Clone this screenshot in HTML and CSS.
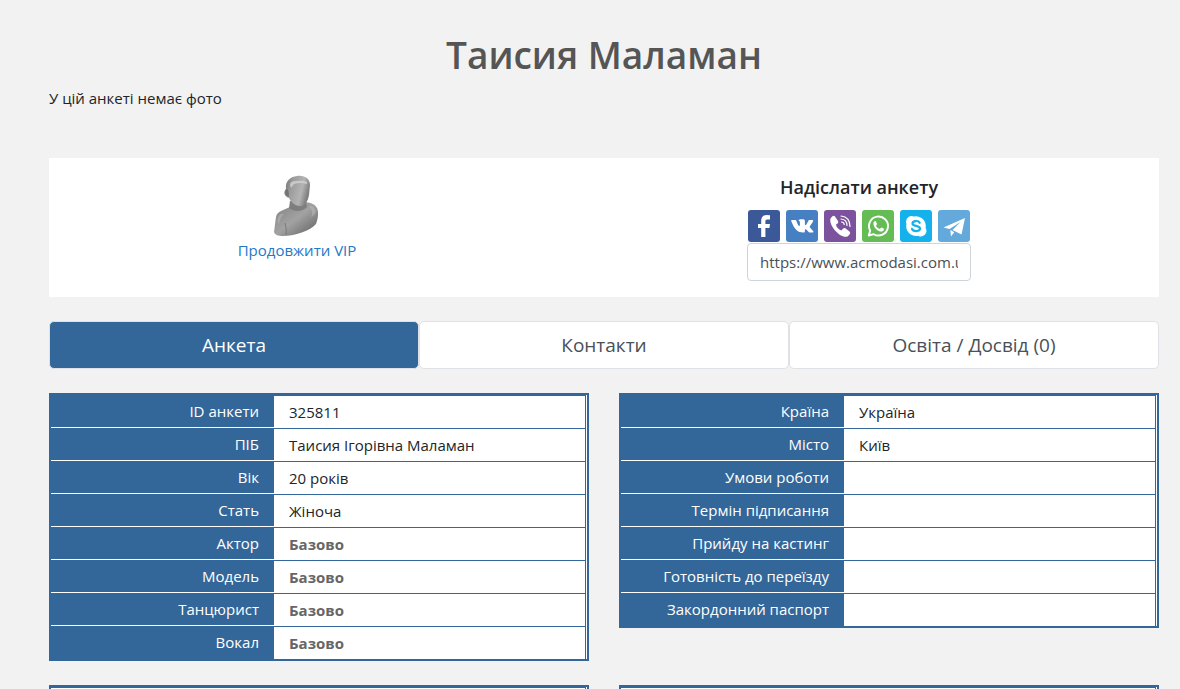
FILE: index.html
```html
<!DOCTYPE html>
<html lang="uk">
<head>
<meta charset="utf-8">
<meta name="viewport" content="width=device-width, initial-scale=1">
<title>Таисия Маламан</title>
<link rel="stylesheet" href="styles.css">
</head>
<body>
<main class="page">
  <h1 class="name">Таисия Маламан</h1>
  <p class="no-photo">У цій анкеті немає фото</p>

  <section class="panel">
    <div class="vip">
      <svg class="avatar" viewBox="0 0 46 64" aria-hidden="true">
        <defs>
          <linearGradient id="body" x1="0" y1="0" x2="1" y2="1">
            <stop offset="0" stop-color="#808080"/><stop offset=".5" stop-color="#a2a2a2"/><stop offset="1" stop-color="#5c5c5c"/>
          </linearGradient>
          <linearGradient id="head" x1="0" y1="0" x2="1" y2=".3">
            <stop offset="0" stop-color="#6c6c6c"/><stop offset=".35" stop-color="#9c9c9c"/><stop offset=".75" stop-color="#b4b4b4"/><stop offset="1" stop-color="#808080"/>
          </linearGradient>
        </defs>
        <path fill="url(#body)" d="M16 33C10 36 3 37 2 43L0 58C1 61 4 62 9 62C22 62 37 56 42 50C44 45 45 38 43 34C41 30 37 29 32 28Z"/>
        <path fill="#7e7e7e" d="M16 27L15 34C20 38 28 38 33 33L32 28Z"/>
        <path fill="none" stroke="#7a7a7a" d="M12 61Q13 55 11 49"/>
        <path fill="#bdbdbd" opacity=".5" d="M4 44Q6 39 10 40Q6 43 5 50Q3 49 4 44ZM35 32Q41 32 42 38Q40 42 37 43Q40 37 35 32Z"/>
        <path fill="url(#head)" d="M12 15C11 7 16 3 23 2C31 1 36 5 36 11L35 21C34 28 30 33 25 32C20 31 17 28 15 24C10 22 9 18 12 15Z"/>
        <path fill="#d2d2d2" opacity=".8" d="M16 11Q16 7 22 7Q29 6 33 8V10Q26 8 20 10L17 14Z"/>
        <path fill="#686868" opacity=".7" d="M12 15Q15 14 15 23Q10 22 12 15Z"/>
      </svg>
      <a class="vip-link" href="#vip">Продовжити VIP</a>
    </div>
    <div class="share">
      <label class="share-title" for="share-url">Надіслати анкету</label>
      <div class="share-icons">
        <a class="social facebook" href="#facebook" aria-label="Facebook"><svg viewBox="0 0 32 32"><path fill="#fff" d="M22 5.2V9.500H19.400C17.700 9.500 17.400 10.300 17.400 11.500V14H22L21.400 18H17.400V27H13.200V18H10V14H13.200V10.700C13.200 7 15.400 5 18.700 5Z"/></svg></a>
        <a class="social vk" href="#vk" aria-label="VK"><svg viewBox="0 0 32 32"><path fill="#fff" d="M6 10H9.200C9.900 10 10.100 10.300 10.400 11C11.400 14 12.600 16 13.300 16C13.700 16 13.900 15.500 13.900 14.500V12.500C13.800 11 13 11 12.500 10.300C13 9.300 14 9.200 16 9.200C18.400 9.200 18.900 9.500 18.900 11.300V14.500C18.900 16 20 15.700 22 11.500C22.600 10.200 22.800 10 23.700 10H26.400C27.400 10 27.300 10.500 26.900 11.500C26 13.300 24.300 15.500 23.900 16.200C23.500 16.800 23.700 17.200 24.400 17.900C25.600 19 27 20.600 27.400 21.500C27.600 22.300 27.200 22.500 26.300 22.500H23.700C22.600 22.500 21.800 20.700 20.200 19.500C19.300 18.900 18.900 19.300 18.900 20.700C18.900 22.300 18.600 22.500 17.200 22.500C11.900 22.500 8.600 19.600 5.400 11.500C5 10.500 5.200 10 6 10Z"/></svg></a>
        <a class="social viber" href="#viber" aria-label="Viber"><svg viewBox="0 0 32 32"><path fill="#fff" d="M6.500 8.500Q9 4.500 11 6.500L14 11Q15 13 12 14.500Q12.500 18.500 17.500 20.500Q19 17.500 21 18L25.500 21.500Q27.500 23.500 23.500 26.500C17 29 4.500 16 6.500 8.500Z"/><path fill="none" stroke="#fff" stroke-width="1.200" stroke-linecap="round" d="M17 6Q26 7 26 16.500M17 9Q23 9.500 23 15.500M17.500 12Q20 12 20.200 14.500"/></svg></a>
        <a class="social whatsapp" href="#whatsapp" aria-label="WhatsApp"><svg viewBox="0 0 32 32"><path fill="none" stroke="#fff" stroke-width="1.900" stroke-linejoin="round" d="M6.800 25.500L8.200 20.600A9.500 9.500 0 1 1 11.700 24.200Z"/><path fill="#fff" d="M11.500 12.500Q13 10.300 14 11.500L15 14Q15 14.800 13.900 15.700Q15 18 17.800 19Q19 17.400 19.800 17.500L22 18.800Q22.300 20.500 20.200 21.500C16.500 22.300 10.700 17.500 11.500 12.500Z"/></svg></a>
        <a class="social skype" href="#skype" aria-label="Skype"><svg viewBox="0 0 32 32"><path fill="#fff" d="M6 12A5.600 5.600 0 0 1 14 6.500A9.700 9.700 0 0 1 25.600 18A5.600 5.600 0 0 1 18 25.700A9.700 9.700 0 0 1 6.400 14Z"/><path fill="none" stroke="#14b1ec" stroke-width="2.200" stroke-linecap="round" d="M19.700 12.800C18.700 10.300 12.500 10.400 12.500 13.400C12.500 16.700 20 15 20 18.600C20 21.900 13 22 12 18.900"/></svg></a>
        <a class="social telegram" href="#telegram" aria-label="Telegram"><svg viewBox="0 0 32 32"><path fill="#fff" d="M27 8L5.500 17.500L11.500 19L22.500 12L14.500 20L23.500 24.500ZM12.300 20L13 26.500L16.200 22.300Z"/></svg></a>
      </div>
      <input class="share-url" id="share-url" type="text" readonly value="https://www.acmodasi.com.ua/325811">
    </div>
  </section>

  <nav class="tabs">
    <button class="tab tab-active" type="button">Анкета</button>
    <button class="tab" type="button">Контакти</button>
    <button class="tab" type="button">Освіта / Досвід (0)</button>
  </nav>

  <div class="tables">
    <table class="info">
      <tr><th scope="row">ID анкети</th><td>325811</td></tr>
      <tr><th scope="row">ПІБ</th><td>Таисия Ігорівна Маламан</td></tr>
      <tr><th scope="row">Вік</th><td>20 років</td></tr>
      <tr><th scope="row">Стать</th><td>Жіноча</td></tr>
      <tr><th scope="row">Актор</th><td><b>Базово</b></td></tr>
      <tr><th scope="row">Модель</th><td><b>Базово</b></td></tr>
      <tr><th scope="row">Танцюрист</th><td><b>Базово</b></td></tr>
      <tr><th scope="row">Вокал</th><td><b>Базово</b></td></tr>
    </table>
    <table class="info">
      <tr><th scope="row">Країна</th><td>Україна</td></tr>
      <tr><th scope="row">Місто</th><td>Київ</td></tr>
      <tr><th scope="row">Умови роботи</th><td></td></tr>
      <tr><th scope="row">Термін підписання</th><td></td></tr>
      <tr><th scope="row">Прийду на кастинг</th><td></td></tr>
      <tr><th scope="row">Готовність до переїзду</th><td></td></tr>
      <tr><th scope="row">Закордонний паспорт</th><td></td></tr>
    </table>
    <table class="info"><tr><td></td></tr></table>
    <table class="info"><tr><td></td></tr></table>
  </div>
</main>
</body>
</html>
```
FILE: styles.css
```css
* { box-sizing: border-box; }

body {
  margin: 0;
  height: 100vh;
  overflow: hidden;
  background: #f2f2f2;
  color: #212529;
  font: 15px/24px "Open Sans", "Noto Sans", sans-serif;
}

.page { padding: 31px 21px 0 49px; }

.name {
  margin: 0 0 7px;
  color: #555;
  font-size: 37px;
  font-weight: 600;
  line-height: 48px;
  text-align: center;
}

.no-photo { margin: 0 0 48px; }

.panel {
  display: grid;
  grid-template-columns: 496px 1fr;
  padding: 16px 0;
  background: #fff;
}

.vip {
  display: flex;
  flex-direction: column;
  align-items: center;
}

.avatar { width: 46px; height: 64px; }

.vip-link { color: #2478c8; text-decoration: none; }

.share {
  display: flex;
  flex-direction: column;
  align-items: center;
  padding-left: 14px;
}

.share-title {
  margin-bottom: 10px;
  font-size: 18px;
  font-weight: 600;
  line-height: 26px;
}

.share-icons { display: flex; gap: 6px; }

.social {
  width: 32px;
  height: 32px;
  border-radius: 3px;
}

.social svg { display: block; }
.facebook { background: #3b5998; }
.vk { background: #4680c2; }
.viber { background: #7c529e; }
.whatsapp { background: #65bc54; }
.skype { background: #14b1ec; }
.telegram { background: #64a9dc; }

.share-url {
  width: 224px;
  height: 38px;
  margin-top: 1px;
  padding: 6px 12px;
  border: 1px solid #ced4da;
  border-radius: 4px;
  background: #fff;
  color: #495057;
  font: inherit;
}

.tabs {
  display: grid;
  grid-template-columns: repeat(3, 1fr);
  margin: 24px 0;
}

.tab {
  height: 48px;
  border: 1px solid #dee2e6;
  border-radius: 5px;
  background: #fff;
  color: #495057;
  font: inherit;
  font-size: 19px;
}

.tab-active { background: #336699; color: #fff; }

.tables {
  display: grid;
  grid-template-columns: 1fr 1fr;
  align-items: start;
  gap: 24px 30px;
}

.info {
  width: 100%;
  padding-right: 1px;
  border: 2px solid #336699;
  border-spacing: 0;
  table-layout: fixed;
  background: #fff;
}

.info th,
.info td {
  height: 33px;
  padding: 0 15px;
}

.info th {
  width: 223px;
  border-bottom: 1px solid #fff;
  background: #336699;
  color: #fff;
  font-weight: 500;
  text-align: right;
}

.info tr:last-child th { border-bottom-color: #336699; }

.info td {
  border: solid #336699;
  border-width: 1px 1px 0 0;
}

.info b { color: #666; }
```
